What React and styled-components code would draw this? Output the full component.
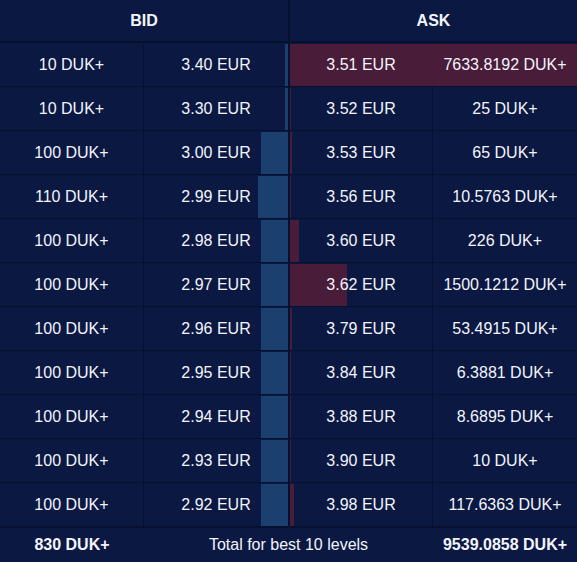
import React from 'react'
import styled, {createGlobalStyle} from 'styled-components'

const GlobalStyle = createGlobalStyle`
  html, body {
    margin: 0;
    padding: 0;
    background: #0b1842;
  }
  body {
    font-family: "Liberation Sans", Arial, sans-serif;
    color: #f2f4fa;
  }
`

const bids = [
    {size: 10, price: '3.40'},
    {size: 10, price: '3.30'},
    {size: 100, price: '3.00'},
    {size: 110, price: '2.99'},
    {size: 100, price: '2.98'},
    {size: 100, price: '2.97'},
    {size: 100, price: '2.96'},
    {size: 100, price: '2.95'},
    {size: 100, price: '2.94'},
    {size: 100, price: '2.93'},
    {size: 100, price: '2.92'},
]

const asks = [
    {size: '7633.8192', price: '3.51'},
    {size: '25', price: '3.52'},
    {size: '65', price: '3.53'},
    {size: '10.5763', price: '3.56'},
    {size: '226', price: '3.60'},
    {size: '1500.1212', price: '3.62'},
    {size: '53.4915', price: '3.79'},
    {size: '6.3881', price: '3.84'},
    {size: '8.6895', price: '3.88'},
    {size: '10', price: '3.90'},
    {size: '117.6363', price: '3.98'},
]

const Book = styled.div`
  width: 577px;
  background: #0b1842;
  font-size: 16px;
`

const Header = styled.div`
  display: grid;
  grid-template-columns: 290px 1fr;
  height: 43px;
  border-bottom: 2px solid #06102f;
  box-sizing: border-box;
`

const HeadCell = styled.div`
  display: flex;
  align-items: center;
  justify-content: center;
  font-weight: bold;
  border-right: ${p => p.$divider ? '2px solid #06102f' : 'none'};
`

const Row = styled.div`
  display: grid;
  grid-template-columns: 144px 146px 143px 1fr;
  height: 44px;
  box-sizing: border-box;
  border-bottom: 1px solid #06102f;
  overflow: hidden;
`

const Cell = styled.div`
  position: relative;
  display: flex;
  align-items: center;
  justify-content: center;
  border-right: ${p => p.$border || 0}px solid #06102f;
`

const Text = styled.span`
  position: relative;
  z-index: 1;
`

const Bar = styled.div`
  position: absolute;
  top: 1px;
  bottom: 0;
  z-index: 0;
  ${p => p.$side === 'bid' ? 'right: 0;' : 'left: 0;'}
  background: ${p => p.$side === 'bid' ? '#1b3f6e' : 'rgba(76, 28, 58, 0.96)'};
`

const Footer = styled.div`
  display: grid;
  grid-template-columns: 144px 289px 1fr;
  height: 35px;
  box-sizing: border-box;
  border-top: 1px solid #06102f;
  padding-bottom: 1px;
`

const FootCell = styled.div`
  display: flex;
  align-items: center;
  justify-content: center;
  font-weight: ${p => p.$bold ? 'bold' : 'normal'};
`

const barWidth = (size, scale) => Math.max(1, Math.round(parseFloat(size) * scale))

export default function App() {
    return (
        <Book>
            <GlobalStyle/>
            <Header>
                <HeadCell $divider>BID</HeadCell>
                <HeadCell>ASK</HeadCell>
            </Header>
            {bids.map((bid, i) => {
                const ask = asks[i]
                return (
                    <Row key={i}>
                        <Cell $border={1}><Text>{bid.size} DUK+</Text></Cell>
                        <Cell $border={2}>
                            <Bar $side="bid" style={{width: barWidth(bid.size, 0.272)}}/>
                            <Text>{bid.price} EUR</Text>
                        </Cell>
                        <Cell $border={1}>
                            <Bar $side="ask" style={{width: barWidth(ask.size, 0.038)}}/>
                            <Text>{ask.price} EUR</Text>
                        </Cell>
                        <Cell><Text>{ask.size} DUK+</Text></Cell>
                    </Row>
                )
            })}
            <Footer>
                <FootCell $bold>830 DUK+</FootCell>
                <FootCell>Total for best 10 levels</FootCell>
                <FootCell $bold>9539.0858 DUK+</FootCell>
            </Footer>
        </Book>
    )
}
